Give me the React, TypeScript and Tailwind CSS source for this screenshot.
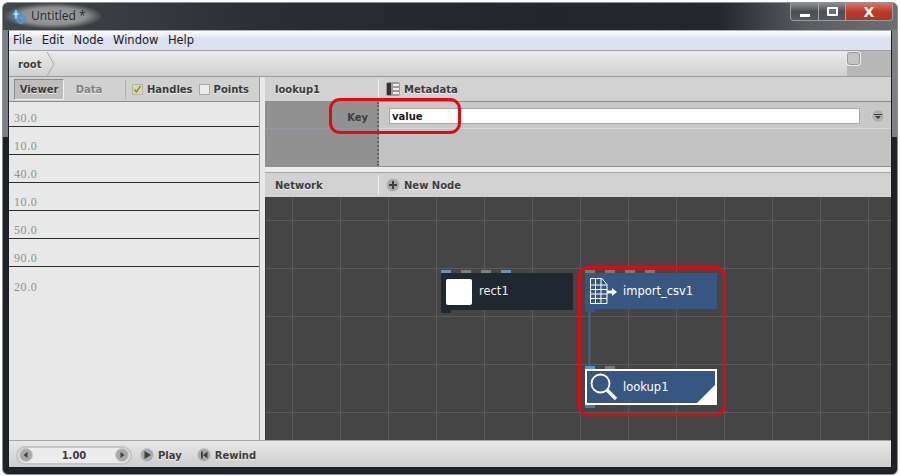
const VALUES = ["30.0", "10.0", "40.0", "10.0", "50.0", "90.0", "20.0"];

const uiFont = "font-['DejaVu_Sans',sans-serif]";
const labelShadow = "[text-shadow:0_1px_0_#efefef]";

function RoundIcon({ children }: { children: React.ReactNode }) {
  return (
    <span className="w-[14px] h-[14px] rounded-full bg-[#a9a9a9] border border-[#c9c9c9] flex items-center justify-center shrink-0">
      <svg width="10" height="10" viewBox="0 0 10 10" fill="#3f3f3f">
        {children}
      </svg>
    </span>
  );
}

function Ports({ colors }: { colors: string[] }) {
  return (
    <div className="flex gap-[10px] h-[3px]">
      {colors.map((c, i) => (
        <span key={i} className={`w-[10px] h-[3px] ${c}`} />
      ))}
    </div>
  );
}

function TitleBar() {
  return (
    <div className="h-[27px] shrink-0 flex items-start justify-between rounded-t-[5px] bg-[linear-gradient(90deg,#43474b_0%,#2a2d31_30%,#22262b_60%,#23272c_80%,#5a5e62_90%,#6b6f73_100%)]">
      <div className="flex items-center h-[26px] w-[100px] pl-[7px] gap-[4px] bg-[radial-gradient(ellipse_closest-side_at_50%_50%,#a3a5a5_0%,#8e9090_65%,transparent_100%)]">
        <svg width="17" height="17" viewBox="0 0 17 17" fill="none">
          <circle cx="11" cy="11" r="3.8" stroke="#3f9bdc" strokeWidth="2.4" />
          <path d="M6 2v9M2.5 6h7" stroke="#3f9bdc" strokeWidth="3" />
          <path d="M6 2.5v8M3.5 6h5" stroke="#ffffff" strokeWidth="1" />
        </svg>
        <span className="text-[12px] text-[#2b2530] font-['Open_Sans',sans-serif] leading-none">Untitled *</span>
      </div>
      <div className="flex h-[18px] mr-[4px] border border-t-0 border-[#9a9da0] rounded-b-[4px] overflow-hidden">
        <div className="w-[28px] bg-[linear-gradient(#8c9094,#4b4f53_50%,#55595d)] border-r border-[#a5a8ab] flex items-end justify-center pb-[3px]">
          <span className="w-[10px] h-[3px] bg-white" />
        </div>
        <div className="w-[27px] bg-[linear-gradient(#8c9094,#4b4f53_50%,#55595d)] border-r border-[#a5a8ab] flex items-center justify-center">
          <span className="w-[11px] h-[9px] border-2 border-white rounded-[1px] bg-[#6a6e72]" />
        </div>
        <div className="w-[46px] bg-[linear-gradient(#d9786a,#c0392b_50%,#a8382a)] flex items-center justify-center">
          <span className="text-white font-bold text-[14px] leading-none font-['DejaVu_Sans',sans-serif]">X</span>
        </div>
      </div>
    </div>
  );
}

function LeftPanel() {
  return (
    <div className="w-[251px] shrink-0 flex flex-col bg-[#e8e8e8] border-r border-[#999999]">
      <div className={`h-[25px] shrink-0 flex items-center bg-[#d1d1d1] border-b border-[#8f8f8f] pl-[5px] text-[10px] font-bold ${uiFont} ${labelShadow}`}>
        <div className="w-[50px] h-[21px] flex items-center justify-center bg-[#bdbdbd] border border-[#8a8a8a] border-r-[#f0f0f0] border-b-[#f0f0f0] text-[#3a3a3a]">
          Viewer
        </div>
        <div className="w-[50px] text-center text-[#7d8288]">Data</div>
        <span className="w-[1px] h-[19px] bg-[#b0b0b0] ml-[11px]" />
        <span className="ml-[6px] w-[11px] h-[11px] bg-[#dcd9a8] border border-[#b5b5a0] flex items-center justify-center">
          <svg width="9" height="9" viewBox="0 0 9 9" fill="none">
            <path d="M1.5 4.5l2 2.5 4-6" stroke="#8d8a4a" strokeWidth="1.4" />
          </svg>
        </span>
        <span className="ml-[4px] text-[#3a3a3a]">Handles</span>
        <span className="ml-[6px] w-[11px] h-[11px] bg-[#ececec] border border-[#a8a8a8]" />
        <span className="ml-[4px] text-[#3a3a3a]">Points</span>
      </div>
      {VALUES.map((v, i) => (
        <div
          key={i}
          className={`shrink-0 flex items-end pl-[5px] pb-[1px] text-[12px] leading-[14px] tracking-[0.6px] text-[#8f8f8f] font-['Liberation_Serif',serif] ${i < 6 ? "border-b border-[#2c2c2c]" : ""} ${i === 0 ? "h-[25px]" : "h-[28px]"}`}
        >
          {v}
        </div>
      ))}
    </div>
  );
}

function ParamHeader() {
  return (
    <div className={`h-[25px] shrink-0 flex items-center bg-[#d2d2d2] border-b border-[#8f8f8f] text-[10px] font-bold text-[#3d3d3d] ${uiFont} ${labelShadow}`}>
      <div className="w-[113px] pl-[10px]">lookup1</div>
      <span className="w-[1px] h-[20px] bg-[#f0f0f0]" />
      <svg className="ml-[7px]" width="14" height="14" viewBox="0 0 14 14">
        <rect width="14" height="14" rx="2" fill="#9b9b9b" />
        <rect x="1" y="1" width="4" height="12" fill="#333" />
        <path d="M7 3h6M7 7h6M7 11h6" stroke="#eee" strokeWidth="2" />
      </svg>
      <span className="ml-[4px]">Metadata</span>
    </div>
  );
}

function Canvas() {
  return (
    <div className="flex-1 relative bg-[#454545] bg-[linear-gradient(to_right,#5a5a5a_1px,transparent_1px),linear-gradient(to_bottom,#5a5a5a_1px,transparent_1px)] bg-size-[48px_48px] bg-position-[26px_23px] border-l border-[#3a3a3a]">
      {/* rect1 */}
      <div className="absolute left-[175px] top-[73px] w-[132px]">
        <Ports colors={["bg-[#6f8fb3]", "bg-[#7f7f7f]", "bg-[#7f7f7f]", "bg-[#6f8fb3]"]} />
        <div className="h-[37px] bg-[#1f2830] flex items-center pl-[5px] gap-[7px]">
          <span className="w-[26px] h-[26px] bg-white rounded-[2px]" />
          <span className={`text-[11.5px] text-[#eeeeee] ${uiFont}`}>rect1</span>
        </div>
        <div className="w-[10px] h-[3px] bg-[#1f2830]" />
      </div>

      {/* import_csv1 */}
      <div className="absolute left-[319px] top-[73px] w-[132px]">
        <Ports colors={["bg-[#7a7a7a]", "bg-[#7a7a7a]", "bg-[#7a7a7a]", "bg-[#7a7a7a]"]} />
        <div className="h-[36px] bg-[#375782] flex items-center pl-[5px]">
          <svg width="27" height="26" viewBox="0 0 27 26" fill="none" stroke="#ffffff">
            <path d="M0.5 0.5H12l5 6V25.5H0.5Z" fill="#375782" />
            <path d="M0.5 7H17M0.5 11.5H17M0.5 16H17M0.5 20.5H17M5.5 1V25M11 1V25" />
            <path d="M17 14h6" strokeWidth="3" />
            <path d="M22 10l5 4-5 4Z" fill="#ffffff" strokeWidth="0" />
          </svg>
          <span className={`ml-[6px] mt-[1px] text-[11.5px] text-white ${uiFont}`}>import_csv1</span>
        </div>
        <div className="w-[10px] h-[3px] bg-[#375782]" />
      </div>

      {/* connection between the two nodes */}
      <svg className="absolute left-[319px] top-[115px]" width="10" height="54" viewBox="0 0 10 54">
        <path d="M4.5 0V54" stroke="#3f6690" strokeWidth="2" />
      </svg>

      {/* lookup1 */}
      <div className="absolute left-[319px] top-[169px] w-[132px]">
        <Ports colors={["bg-[#5f93c4]", "bg-[#7a7a7a]"]} />
        <div className="h-[36px] bg-[#375782] border-2 border-white relative flex items-center pl-[3px] overflow-hidden">
          <svg width="28" height="28" viewBox="0 0 28 28" fill="none" stroke="#ffffff">
            <circle cx="10.5" cy="10.5" r="9" strokeWidth="1.8" />
            <path d="M17 17l9 9" strokeWidth="3.2" />
          </svg>
          <span className={`ml-[5px] mt-[1px] text-[11.5px] text-white ${uiFont}`}>lookup1</span>
          <svg className="absolute right-0 bottom-0" width="18" height="18" viewBox="0 0 18 18">
            <path d="M18 0V18H0Z" fill="#ffffff" />
          </svg>
        </div>
        <div className="w-[10px] h-[3px] bg-[#4a7aa8]" />
      </div>
    </div>
  );
}

function RightPanel() {
  return (
    <div className="flex-1 min-w-0 flex flex-col ml-[5px]">
      <ParamHeader />
      <div className={`h-[65px] shrink-0 flex border-b border-[#8f8f8f] ${uiFont}`}>
        <div className="w-[114px] shrink-0 bg-[#919191] border-r-2 border-dotted border-[#5f6368]">
          <div className="h-[27px] border-b border-[#8f98a3] flex items-center justify-end pt-[4px] pr-[9px] text-[10px] font-bold text-[#3d3d3d]">
            Key
          </div>
        </div>
        <div className="flex-1 min-w-0 bg-[#c2c2c2]">
          <div className="h-[27px] bg-[#c8c8c8] border-b border-[#d6d6d6] flex items-center pt-[2px] pl-[10px]">
            <div className="w-[471px] shrink-0 h-[16px] bg-white border border-[#a8a8a8] flex items-center pl-[2px] text-[10px] font-bold text-[#1a1a1a]">
              value
            </div>
            <span className="ml-[11px] w-[14px] h-[14px] shrink-0 rounded-full bg-[#b0b0b0] border border-[#d6d6d6] flex items-center justify-center">
              <svg width="8" height="5" viewBox="0 0 8 5">
                <path d="M0 0h8v1H0ZM1 2h6L4 5Z" fill="#3f3f3f" />
              </svg>
            </span>
          </div>
        </div>
      </div>
      <div className="h-[6px] shrink-0 bg-[#ececec] border-b border-[#a5a5a5]" />
      <div className={`h-[24px] shrink-0 flex items-center bg-[#d2d2d2] text-[10px] font-bold text-[#3d3d3d] ${uiFont} ${labelShadow}`}>
        <div className="w-[113px] pl-[10px]">Network</div>
        <span className="w-[1px] h-[20px] bg-[#f0f0f0]" />
        <span className="ml-[7px]">
          <RoundIcon>
            <path d="M4 1h2v3h3v2H6v3H4V6H1V4h3Z" />
          </RoundIcon>
        </span>
        <span className="ml-[4px]">New Node</span>
      </div>
      <Canvas />
    </div>
  );
}

function Footer() {
  return (
    <div className={`h-[27px] shrink-0 flex items-center bg-[linear-gradient(#e8e8e8,#cdcdcd)] border-t border-[#a5a5a5] pt-[2px] pl-[7px] text-[10px] font-bold text-[#3d3d3d] ${uiFont} ${labelShadow}`}>
      <div className="w-[116px] h-[19px] rounded-full bg-[#ececec] border-2 border-[#c4c4c4] flex items-center justify-between px-[1px]">
        <RoundIcon>
          <path d="M6.5 2v6L2.5 5Z" />
        </RoundIcon>
        <span>1.00</span>
        <RoundIcon>
          <path d="M3.5 2v6l4-3Z" />
        </RoundIcon>
      </div>
      <span className="ml-[8px]">
        <RoundIcon>
          <path d="M2.5 1v8L9 5Z" />
        </RoundIcon>
      </span>
      <span className="ml-[4px]">Play</span>
      <span className="ml-[15px]">
        <RoundIcon>
          <path d="M2 1.5h1.8v7H2ZM8.5 1.5v7L4 5Z" />
        </RoundIcon>
      </span>
      <span className="ml-[4px]">Rewind</span>
    </div>
  );
}

export default function App() {
  return (
    <div className="w-[900px] h-[476px] relative overflow-hidden flex flex-col bg-white pt-[2px] px-[2px] pb-[1px]">
      <div className="flex-1 min-h-0 flex flex-col rounded-[6px] border border-[#8d9093] bg-[linear-gradient(#7d8185_0,#7d8185_134px,#1e2226_134px)]">
        <TitleBar />
        <div className="flex-1 min-h-0 mx-[5px] mb-[6px] flex flex-col bg-[#e8e8e8] border border-[#1a1d20] border-t-[#aeb0b2]">
          <div className="h-[20px] shrink-0 flex items-center gap-[9.5px] pt-[1px] pl-[4px] bg-[linear-gradient(#ffffff,#dbe1f0_40%,#dde2ee)] border-b border-[#a0a0a0] text-[11.5px] text-[#222222] font-['DejaVu_Sans',sans-serif]">
            <span>File</span>
            <span>Edit</span>
            <span>Node</span>
            <span>Window</span>
            <span>Help</span>
          </div>
          <div className="h-[26px] shrink-0 flex bg-[#b8b8b8] border-b border-[#9a9a9a]">
            <div className={`flex-1 flex items-center pl-[9px] bg-[linear-gradient(#ececec,#cfcfcf)] text-[10px] font-bold text-[#3d3d3d] ${uiFont} ${labelShadow}`}>
              <span className="mt-[1px]">root</span>
              <svg className="ml-[5px]" width="9" height="24" viewBox="0 0 9 24" fill="none">
                <path d="M1 0l7 12-7 12" stroke="#a8a8a8" />
              </svg>
            </div>
            <div className="w-[44px] flex items-start">
              <span className="w-[13px] h-[13px] mt-[1px] rounded-[3px] bg-[#c4c4c4] border border-[#999999] ring-1 ring-[#ececec]" />
            </div>
          </div>
          <div className="flex-1 min-h-0 flex">
            <LeftPanel />
            <RightPanel />
          </div>
          <Footer />
        </div>
      </div>

      {/* red annotations drawn over the screenshot */}
      <div className="absolute left-[329px] top-[98px] w-[132px] h-[36px] border-[3px] border-[#e30613] rounded-[11px]" />
      <div className="absolute left-[578px] top-[266px] w-[148px] h-[150px] border-[3px] border-[#e30613] rounded-[10px]" />
    </div>
  );
}
